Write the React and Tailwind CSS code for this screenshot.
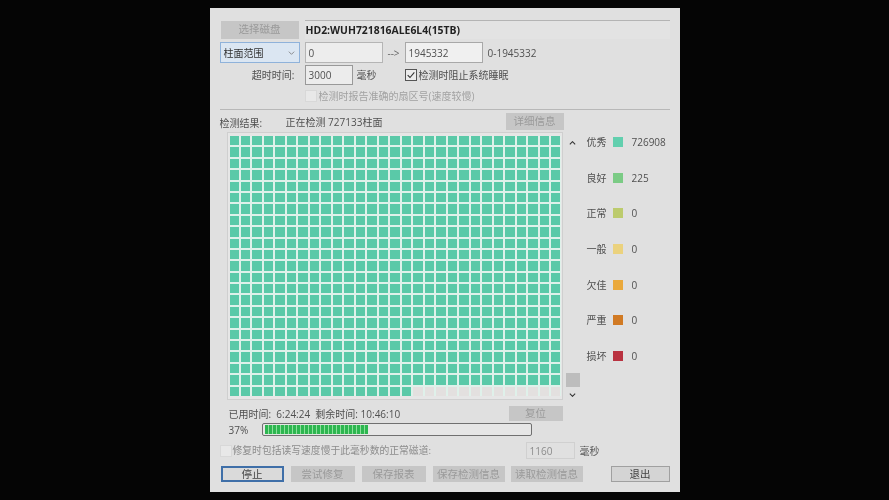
const font = { fontFamily: '"Open Sans","Noto Sans CJK SC",sans-serif' };

const legend = [
  ["优秀", "bg-[#62cfae]", "726908"],
  ["良好", "bg-[#7bcb85]", "225"],
  ["正常", "bg-[#bccb6d]", "0"],
  ["一般", "bg-[#ebd27e]", "0"],
  ["欠佳", "bg-[#eaa93c]", "0"],
  ["严重", "bg-[#d17a24]", "0"],
  ["损坏", "bg-[#b93240]", "0"],
];

const cells = Array.from({ length: 23 * 29 }, (_, i) => i < 22 * 29 + 16);

function Btn({ className = "", children }) {
  return (
    <div className={`flex items-center justify-center bg-[#c6c6c6] text-[#9a9a9a] text-[10.5px] ${className}`}>
      {children}
    </div>
  );
}

function Check({ checked, disabled, className = "" }) {
  return (
    <div className={`flex h-[12px] w-[12px] shrink-0 items-center justify-center border ${disabled ? "border-[#d8d8d8] bg-[#e8e8e8]" : "border-[#555] bg-[#ececec]"} ${className}`}>
      {checked && (
        <svg viewBox="0 0 12 12" className="h-[10px] w-[10px]" fill="none" stroke="#333" strokeWidth="1.3">
          <path d="M2 6.2 L4.8 9 L10 2.8" />
        </svg>
      )}
    </div>
  );
}

export default function App() {
  return (
    <div className="flex h-[500px] w-[889px] justify-center overflow-hidden bg-[#050505]" style={font}>
      <div className="mt-[8px] flex h-[484px] w-[470px] flex-col bg-[#e0e0e0] pl-[10px] pr-[10px] pt-[12px] text-[10px] leading-none text-[#505050] blur-[0.5px]">
        <div className="flex h-[19px] items-center">
          <Btn className="ml-[1px] h-[18px] w-[78px]">选择磁盘</Btn>
          <div className="ml-[6px] flex h-[19px] w-[365px] items-center border-t border-[#b4b4b4] bg-[#e3e3e3] pl-[1px] text-[10.4px] font-bold text-[#222]">
            HD2:WUH721816ALE6L4(15TB)
          </div>
        </div>

        <div className="mt-[3px] flex h-[21px] items-center">
          <div className="flex h-[21px] w-[80px] items-center justify-between border border-[#8fb2da] bg-[#dbe6f2] pl-[3px] pr-[4px] text-[#333]">
            柱面范围
            <svg viewBox="0 0 10 6" className="h-[4px] w-[7px]" fill="none" stroke="#777" strokeWidth="1.2">
              <path d="M1 1 L5 5 L9 1" />
            </svg>
          </div>
          <div className="ml-[5px] flex h-[21px] w-[78px] items-center border border-[#b5b5b5] bg-[#ededed] pl-[3px]">0</div>
          <div className="flex w-[22px] justify-center text-[#666]">--&gt;</div>
          <div className="flex h-[21px] w-[78px] items-center border border-[#a8a8a8] bg-[#f0f0f0] pl-[3px]">1945332</div>
          <div className="ml-[5px]">0-1945332</div>
        </div>

        <div className="mt-[2px] flex h-[20px] items-center">
          <div className="w-[75px] text-right">超时时间:</div>
          <div className="ml-[10px] flex h-[20px] w-[48px] items-center border border-[#999] bg-[#ececec] pl-[3px]">3000</div>
          <div className="ml-[4px] w-[48px]">毫秒</div>
          <Check checked />
          <div className="ml-[2px]">检测时阻止系统睡眠</div>
        </div>

        <div className="mt-[4px] flex h-[14px] items-center pl-[85px] text-[#a2a2a2]">
          <Check disabled />
          <div className="ml-[2px]">检测时报告准确的扇区号(速度较慢)</div>
        </div>

        <div className="mt-[6px] h-[1px] w-full bg-[#b8b8b8]" />

        <div className="mt-[3px] flex h-[17px] items-center">
          <div className="w-[66px] pt-[3px]">检测结果:</div>
          <div className="flex-1">正在检测 727133柱面</div>
          <Btn className="mr-[106px] h-[17px] w-[58px]">详细信息</Btn>
        </div>

        <div className="mt-[2px] flex h-[268px]">
          <div className="ml-[7px] h-[268px] w-[336px] border border-[#cfcfcf] bg-[#e6e6e6] pl-[2px] pr-[1px] pt-[3px]">
            <div className="grid grid-cols-[repeat(29,minmax(0,1fr))] gap-[2px] bg-[#dff1ea]">
              {cells.map((on, i) => (
                <div key={i} className={`h-[9.4px] ${on ? "bg-[#5ac9a8]" : "bg-[#e3e0df]"}`} />
              ))}
            </div>
          </div>

          <div className="ml-[3px] flex w-[14px] flex-col items-center">
            <svg viewBox="0 0 10 6" className="mt-[9px] h-[4px] w-[7px]" fill="none" stroke="#333" strokeWidth="1.6">
              <path d="M1 5 L5 1 L9 5" />
            </svg>
            <div className="mt-[228px] h-[14px] w-[14px] bg-[#bdbdbd]" />
            <svg viewBox="0 0 10 6" className="mt-[6px] h-[4px] w-[7px]" fill="none" stroke="#333" strokeWidth="1.6">
              <path d="M1 1 L5 5 L9 1" />
            </svg>
          </div>

          <div className="ml-[7px] flex flex-col gap-[25.7px] pt-[5px]">
            {legend.map(([name, color, n]) => (
              <div key={name} className="flex h-[10px] items-center">
                <div className="w-[26px]">{name}</div>
                <div className={`h-[10px] w-[10px] ${color}`} />
                <div className="ml-[9px]">{n}</div>
              </div>
            ))}
          </div>
        </div>

        <div className="mt-[6px] flex h-[15px] items-center pl-[9px]">
          <div className="w-[280px]">已用时间:&nbsp; 6:24:24&nbsp; 剩余时间: 10:46:10</div>
          <Btn className="h-[15px] w-[54px]">复位</Btn>
        </div>

        <div className="mt-[2px] flex h-[13px] items-center pl-[9px]">
          <div className="w-[33px]">37%</div>
          <div className="flex h-[13px] w-[270px] items-center rounded-[2px] border border-[#707070] bg-[#e6e6e6] pl-[2px]">
            <div className="flex h-[9px] gap-[1px] bg-[#8be09a]">
              {Array.from({ length: 26 }, (_, i) => (
                <div key={i} className="h-[9px] w-[3px] bg-[#2db650]" />
              ))}
            </div>
          </div>
        </div>

        <div className="mt-[6px] flex h-[17px] items-center text-[#8c8c8c]">
          <Check disabled />
          <div className="ml-[1px] w-[293px] text-[9.8px]">修复时包括读写速度慢于此毫秒数的正常磁道:</div>
          <div className="flex h-[17px] w-[49px] items-center border border-[#d0d0d0] pl-[3px]">1160</div>
          <div className="ml-[5px] text-[#555]">毫秒</div>
        </div>

        <div className="mt-[7px] flex h-[16px] items-center text-[10.5px] text-[#444]">
          <div className="ml-[1px] flex h-[16px] w-[63px] items-center justify-center border-2 border-[#3f6fa8] bg-[#dadada]">停止</div>
          <Btn className="ml-[7px] h-[16px] w-[64px]">尝试修复</Btn>
          <Btn className="ml-[7px] h-[16px] w-[64px]">保存报表</Btn>
          <Btn className="ml-[7px] h-[16px] w-[72px]">保存检测信息</Btn>
          <Btn className="ml-[6px] h-[16px] w-[72px]">读取检测信息</Btn>
          <div className="ml-[28px] flex h-[16px] w-[59px] items-center justify-center border border-[#a0a0a0] bg-[#d4d4d4]">退出</div>
        </div>
      </div>
    </div>
  );
}
